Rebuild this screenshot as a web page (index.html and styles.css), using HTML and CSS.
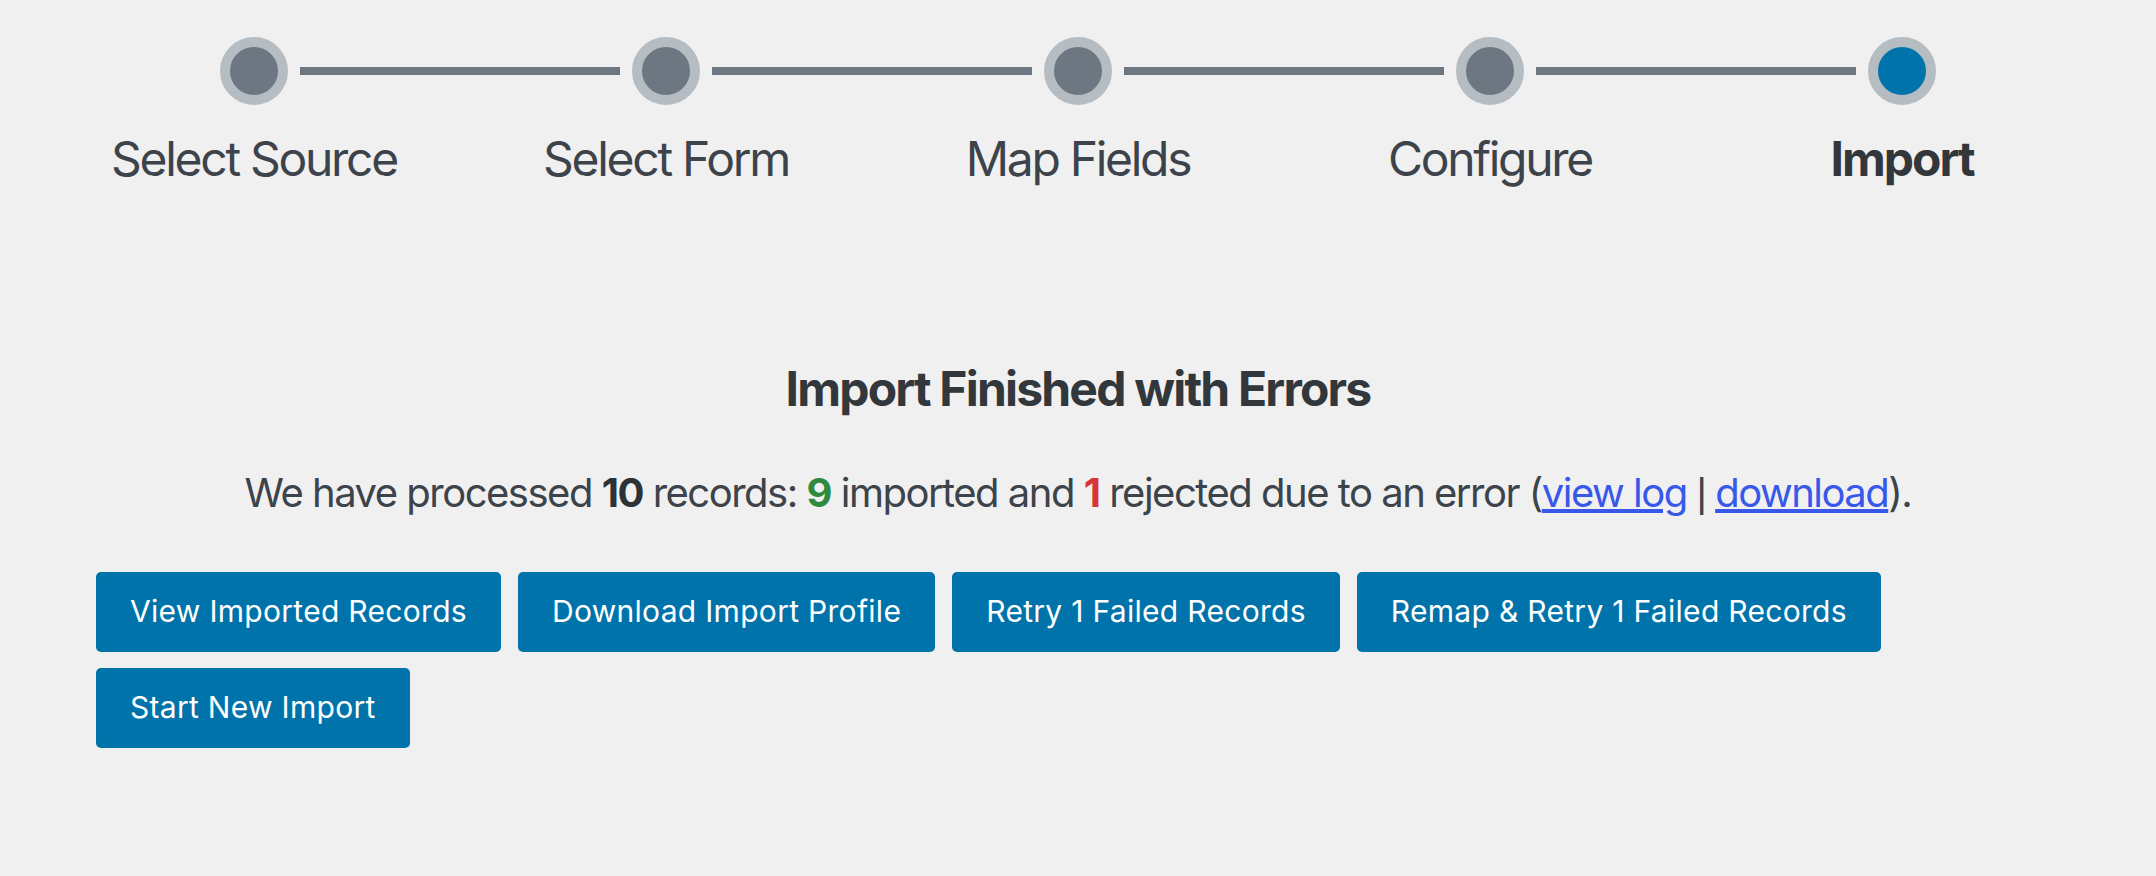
FILE: index.html
```html
<!DOCTYPE html>
<html>
<head>
  <meta charset="utf-8">
  <title>Import</title>
  <link rel="stylesheet" href="styles.css">
</head>
<body>

  <div class="steps">
    <div class="track">
      <span class="dot"></span><span class="bar"></span>
      <span class="dot"></span><span class="bar"></span>
      <span class="dot"></span><span class="bar"></span>
      <span class="dot"></span><span class="bar"></span>
      <span class="dot current"></span>
    </div>
    <ol class="labels">
      <li>Select Source</li>
      <li>Select Form</li>
      <li>Map Fields</li>
      <li>Configure</li>
      <li class="current">Import</li>
    </ol>
  </div>

  <div class="result">
    <h2>Import Finished with Errors</h2>
    <p>We have processed <b>10</b> records: <b class="ok">9</b> imported and <b class="bad">1</b> rejected due to an error (<a href="#">view log</a> <span class="sep">|</span> <a href="#">download</a>).</p>
  </div>

  <div class="actions">
    <button class="button">View Imported Records</button>
    <button class="button">Download Import Profile</button>
    <button class="button">Retry 1 Failed Records</button>
    <button class="button">Remap &amp; Retry 1 Failed Records</button>
    <button class="button">Start New Import</button>
  </div>

</body>
</html>
```

FILE: styles.css
```css
body {
    margin: 0;
    background: #f0f0f1;
    color: #3c434a;
    font-family: Inter, "Liberation Sans", sans-serif;
}

/* step indicator */
.track {
    display: flex;
    align-items: center;
    padding: 37px 220px 0;
}

.dot {
    flex: none;
    width: 48px;
    height: 48px;
    border: 10px solid #b5bcc2;
    border-radius: 50%;
    background: #6c7781;
}

.dot.current {
    background: #0073aa;
}

.bar {
    flex: 1;
    height: 8px;
    margin: 0 12px;
    background: #6c7781;
}

.labels {
    display: grid;
    grid-template-columns: repeat(5, 1fr);
    margin: 25px 0 0;
    padding: 0 48px;
    list-style: none;
    font-size: 48px;
    line-height: 58px;
    letter-spacing: -2.3px;
    text-align: center;
}

.labels .current {
    font-weight: bold;
    color: #32373c;
    letter-spacing: -2px;
}

/* result message */
.result {
    margin-top: 172px;
    text-align: center;
}

.result h2 {
    margin: 0;
    font-size: 48px;
    line-height: 58px;
    letter-spacing: -1.8px;
    color: #32373c;
}

.result p {
    margin: 51px 0 0;
    font-size: 40px;
    line-height: 48px;
    letter-spacing: -1.5px;
}

.result b {
    color: #2c3338;
}

.result .ok {
    color: #2e8a3e;
}

.result .bad {
    color: #d63638;
}

.result a {
    color: #3858e9;
}

.result .sep {
    font-family: "Liberation Sans", sans-serif;
}

/* buttons */
.actions {
    display: flex;
    flex-wrap: wrap;
    gap: 16px 17px;
    margin-top: 55px;
    padding: 0 96px;
}

.button {
    padding: 21px 34px 22px;
    border: none;
    border-radius: 5px;
    background: #0073aa;
    color: #fff;
    font-family: inherit;
    font-size: 30px;
    line-height: 37px;
    letter-spacing: 0.3px;
}
```
